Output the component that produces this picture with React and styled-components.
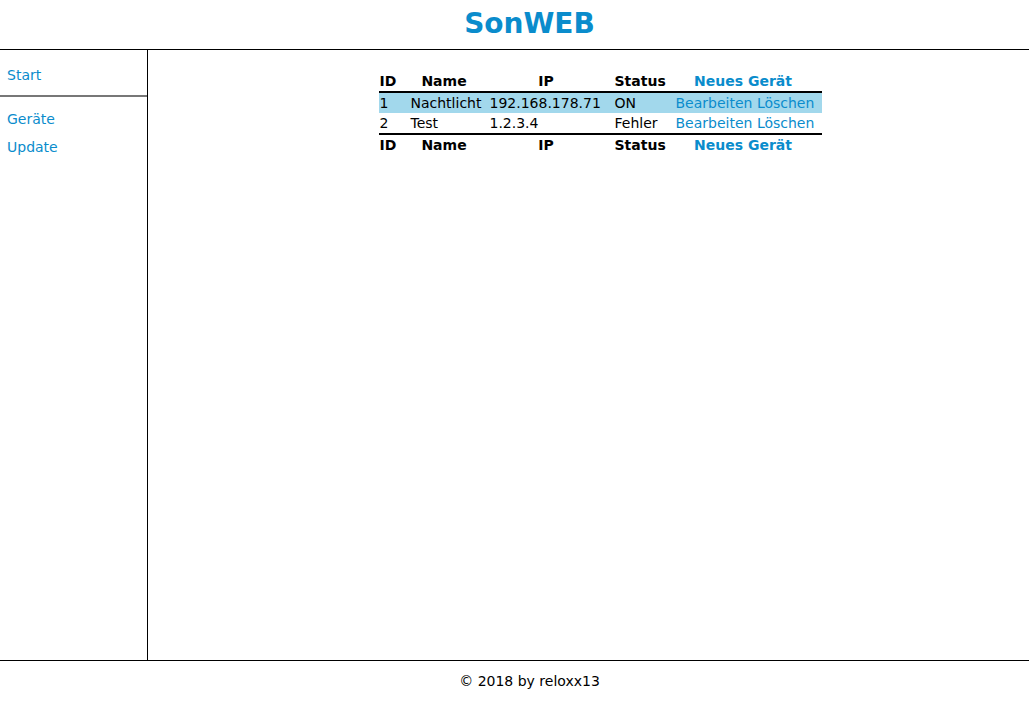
import React from "react";
import styled, { createGlobalStyle } from "styled-components";

const GlobalStyle = createGlobalStyle`
  html, body {
    margin: 0;
    padding: 0;
    background: #fff;
    font-family: "DejaVu Sans", Verdana, sans-serif;
    font-size: 14px;
    color: #000;
  }
`;

const Page = styled.div`
  display: flex;
  flex-direction: column;
  height: 720px;
`;

const Header = styled.header`
  height: 49px;
  border-bottom: 1px solid #000;
  display: flex;
  align-items: center;
  justify-content: center;
  padding-left: 30px;
`;

const Title = styled.h1`
  margin: 0 0 2px;
  font-size: 28px;
  font-weight: bold;
  color: #0a8ccc;
`;

const Body = styled.div`
  flex: 1;
  display: flex;
  min-height: 0;
`;

const Sidebar = styled.nav`
  width: 147px;
  border-right: 1px solid #000;
  padding-top: 15px;
`;

const NavLink = styled.a`
  display: block;
  padding: 0 7px;
  line-height: 20px;
  margin-bottom: ${({ $gap }) => $gap ?? 8}px;
  color: #0a8ccc;
  text-decoration: none;
  cursor: pointer;
`;

const Divider = styled.hr`
  margin: 0 0 12px;
  border: none;
  border-top: 2px solid #777;
`;

const Main = styled.main`
  flex: 1;
  display: flex;
  justify-content: center;
  align-items: flex-start;
  padding-top: 21px;
`;

const Table = styled.table`
  border-collapse: collapse;
  table-layout: fixed;
  width: 443px;
  margin-left: 23px;
`;

const Th = styled.th`
  box-sizing: border-box;
  width: ${({ $w }) => $w}px;
  padding: 0 11px 0 1px;
  line-height: 20px;
  font-weight: bold;
  white-space: nowrap;
  text-align: ${({ $left }) => ($left ? "left" : "center")};
`;

const Td = styled.td`
  padding: 0 11px 0 1px;
  line-height: 20px;
  white-space: nowrap;
  overflow: visible;
`;

const HeadRow = styled.tr`
  border-bottom: 2px solid #000;
`;

const FootRow = styled.tr`
  border-top: 2px solid #000;
`;

const Row = styled.tr`
  background: ${({ $active }) => ($active ? "#a2d8ec" : "transparent")};
`;

const Link = styled.a`
  color: #0a8ccc;
  text-decoration: none;
  cursor: pointer;
`;

const BoldLink = styled(Link)`
  font-weight: bold;
`;

const Footer = styled.footer`
  height: 60px;
  border-top: 1px solid #000;
  text-align: center;
  padding: 10px 0 0 30px;
  line-height: 20px;
  box-sizing: border-box;
`;

const devices = [
  { id: 1, name: "Nachtlicht", ip: "192.168.178.71", status: "ON", active: true },
  { id: 2, name: "Test", ip: "1.2.3.4", status: "Fehler" },
];

const HeaderCells = () => (
  <>
    <Th $left $w={31}>ID</Th>
    <Th $w={79}>Name</Th>
    <Th $w={125}>IP</Th>
    <Th $left $w={61}>Status</Th>
    <Th $w={147}>
      <BoldLink>Neues Gerät</BoldLink>
    </Th>
  </>
);

export default function App() {
  return (
    <>
      <GlobalStyle />
      <Page>
        <Header>
          <Title>SonWEB</Title>
        </Header>
        <Body>
          <Sidebar>
            <NavLink $gap={10}>Start</NavLink>
            <Divider />
            <NavLink>Geräte</NavLink>
            <NavLink>Update</NavLink>
          </Sidebar>
          <Main>
            <Table>
              <thead>
                <HeadRow>
                  <HeaderCells />
                </HeadRow>
              </thead>
              <tbody>
                {devices.map((d) => (
                  <Row key={d.id} $active={d.active}>
                    <Td>{d.id}</Td>
                    <Td>{d.name}</Td>
                    <Td>{d.ip}</Td>
                    <Td>{d.status}</Td>
                    <Td>
                      <Link>Bearbeiten</Link> <Link>Löschen</Link>
                    </Td>
                  </Row>
                ))}
              </tbody>
              <tfoot>
                <FootRow>
                  <HeaderCells />
                </FootRow>
              </tfoot>
            </Table>
          </Main>
        </Body>
        <Footer>© 2018 by reloxx13</Footer>
      </Page>
    </>
  );
}
